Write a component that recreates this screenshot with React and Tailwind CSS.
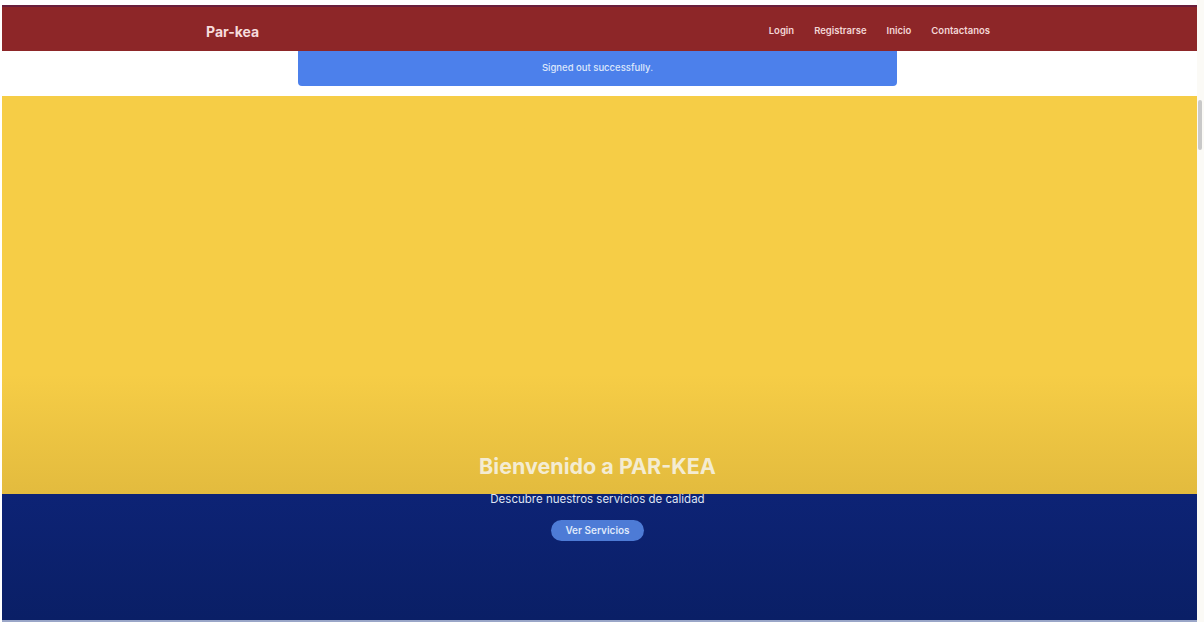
import React from 'react';

const App = () => {
  return (
    <div className="flex h-[622px] w-[1204px] overflow-hidden bg-white font-['Inter',sans-serif]">
      {/* page */}
      <div className="flex flex-1 flex-col pl-[2px] pt-[5px]">
        {/* Navbar */}
        <nav className="flex h-[46px] items-center border-t-2 border-[#6a1f3c] bg-[#8d2628] pt-[4px]">
          <div className="flex w-full items-center pl-[204px] pr-[207px]">
            <span className="text-[14px] font-bold text-[#f6dcdc]">Par-kea</span>
            <ul className="ml-auto flex items-center gap-[20px] text-[9.5px] font-semibold text-[#f3d6d6]">
              <li>Login</li>
              <li>Registrarse</li>
              <li>Inicio</li>
              <li>Contactanos</li>
            </ul>
          </div>
        </nav>

        {/* Flash */}
        <div className="flex h-[45px] justify-center bg-white">
          <div className="ml-[-4px] flex h-[35px] w-[599px] items-center justify-center rounded-b-[4px] bg-[#4c80eb] text-[9.5px] font-medium text-[#dde7fb]">
            Signed out successfully.
          </div>
        </div>

        {/* Hero */}
        <section className="relative flex flex-1 flex-col">
          <div className="h-[398px] bg-gradient-to-b from-[#f6cd46] from-70% to-[#e3bb3e]"></div>
          <div className="flex-1 bg-gradient-to-b from-[#0d2375] to-[#0a1f66]"></div>
          <div className="h-[2px] bg-[#9aa6c8]"></div>

          <div className="absolute left-0 right-[4px] top-[354px] flex flex-col items-center">
            <h1 className="text-[21.5px] font-bold text-[#f4ecd2]">Bienvenido a PAR-KEA</h1>
            <p className="mt-[9px] text-[11.5px] text-[#dfe4f3]">Descubre nuestros servicios de calidad</p>
            <button className="mt-[11px] h-[21px] w-[93px] rounded-full bg-[#4d7bd6] text-[10px] font-semibold text-[#dfe8fb]">
              Ver Servicios
            </button>
          </div>
        </section>
      </div>

      {/* scrollbar */}
      <div className="flex w-[7px] flex-col bg-[#fbfaf6] pt-[100px]">
        <div className="ml-[1px] h-[50px] w-[4px] rounded bg-[#c9c9c9]"></div>
      </div>
    </div>
  );
};

export default App;
